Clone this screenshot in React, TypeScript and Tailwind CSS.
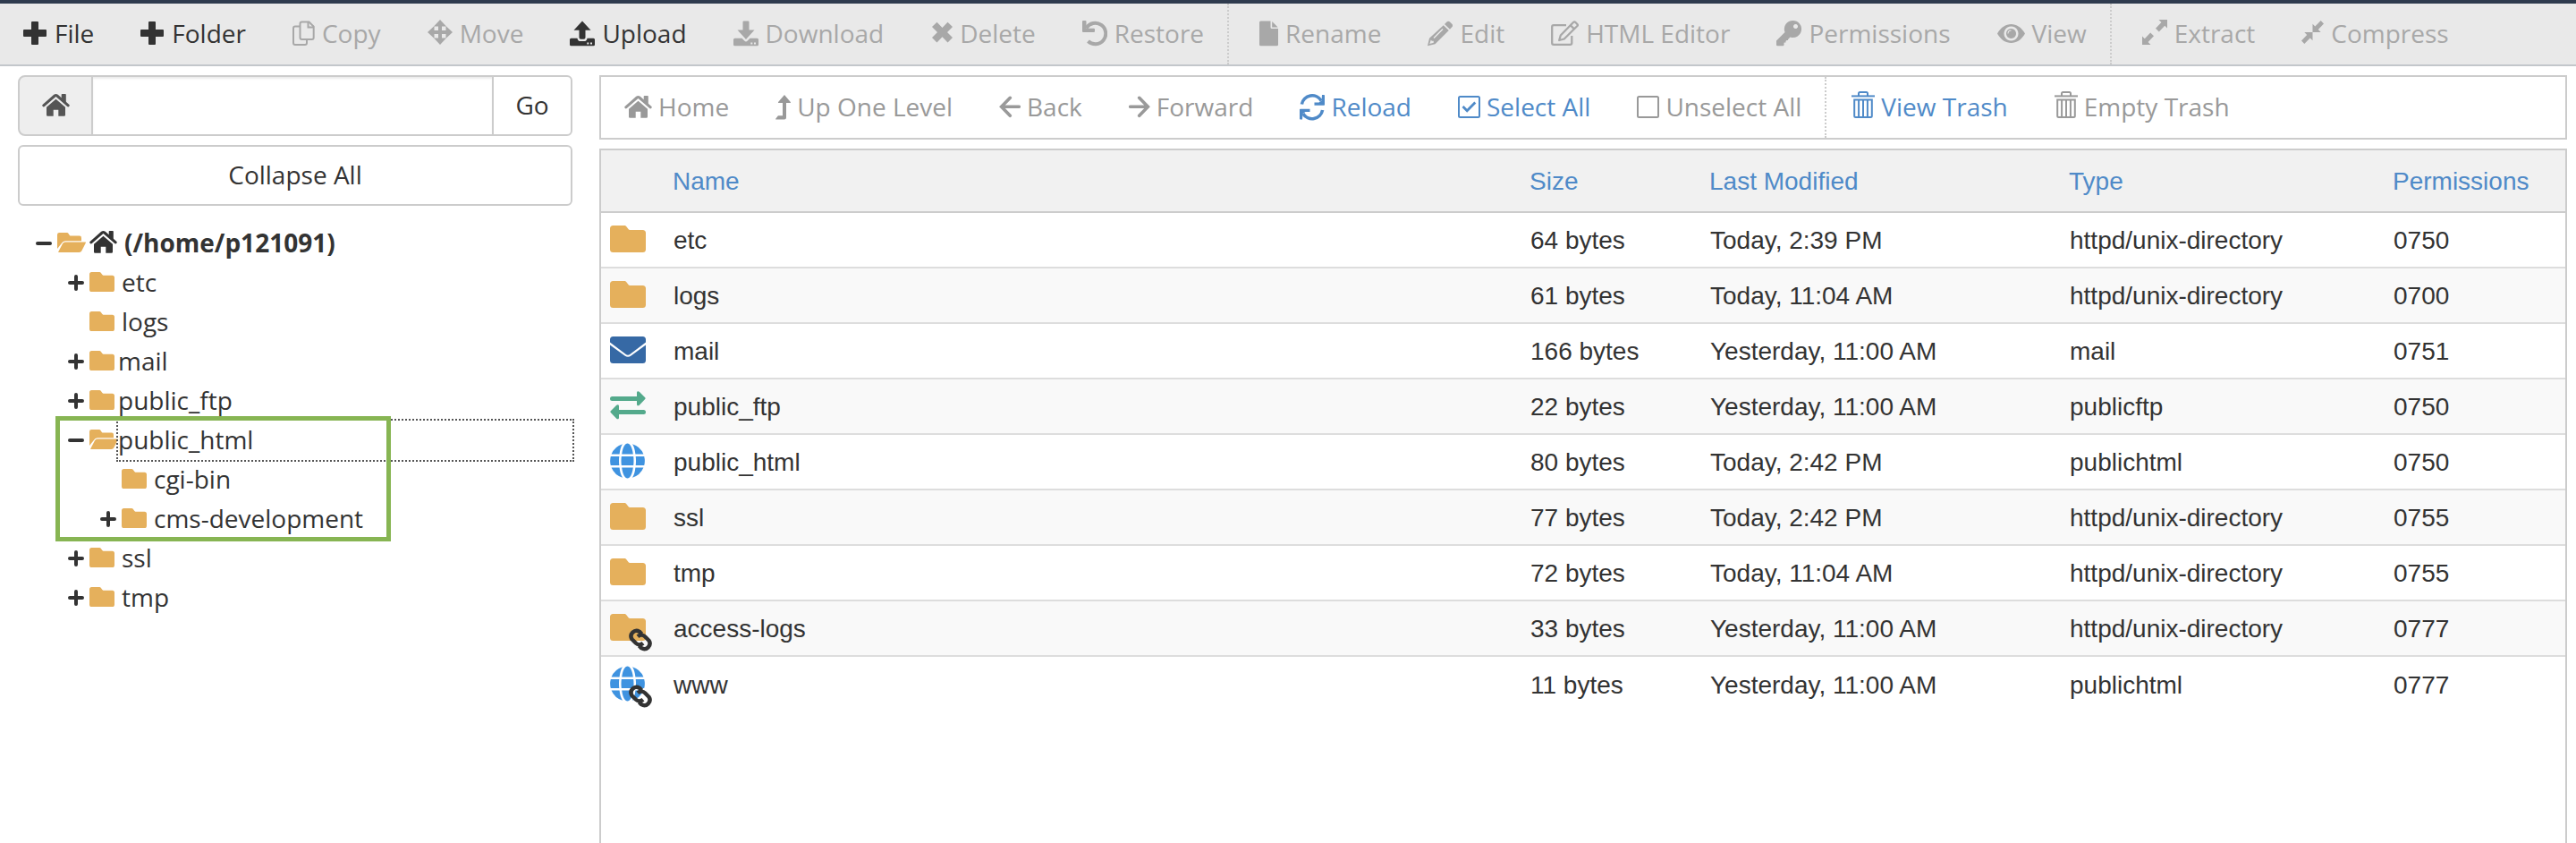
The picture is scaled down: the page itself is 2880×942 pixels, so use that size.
import type { ReactNode } from "react";

/* ---------- Icons ---------- */

function Icon({ w, children }: { w: number; children: ReactNode }) {
  return (
    <svg
      width={w}
      height={40}
      viewBox={`0 -4 ${w} 40`}
      fill="currentColor"
      stroke="none"
      className="shrink-0"
      aria-hidden="true"
    >
      {children}
    </svg>
  );
}

const PlusIcon = () => (
  <Icon w={27}>
    <path d="M10 2h6a1 1 0 0 1 1 1v8h8a1 1 0 0 1 1 1v6a1 1 0 0 1-1 1h-8v8a1 1 0 0 1-1 1h-6a1 1 0 0 1-1-1v-8H1a1 1 0 0 1-1-1v-6a1 1 0 0 1 1-1h8V3a1 1 0 0 1 1-1z" />
  </Icon>
);

const CopyIcon = () => (
  <Icon w={25}>
    <g fill="none" stroke="currentColor" strokeWidth="2">
      <path d="M10.500 2.500h8l5.200 5.200v12.300a2 2 0 0 1-2 2H10.500a2 2 0 0 1-2-2V4.500a2 2 0 0 1 2-2z" />
      <path d="M17.500 2.500v6h6" />
      <path d="M8.500 7.500H3a2 2 0 0 0-2 2v16.500a2 2 0 0 0 2 2h11a2 2 0 0 0 2-2v-4" />
    </g>
  </Icon>
);

const MoveIcon = () => (
  <Icon w={28}>
    <path d="M14 0l7 7.500h-5v4.500h4.500V7L28 14l-7.500 7v-5H16v4.500h5L14 28l-7-7.500h5V16H7.500v5L0 14l7.500-7v5H12V7.500H7z" />
  </Icon>
);

const UploadIcon = () => (
  <Icon w={28}>
    <path d="M14 1.500l9.500 10.200h-6v8.300a1.800 1.800 0 0 1-1.800 1.800h-3.400a1.800 1.800 0 0 1-1.800-1.800v-8.300h-6z" />
    <path
      fillRule="evenodd"
      d="M1.500 20.700H8.500c.3 2.500 1.500 3.300 3.500 3.300h4c2 0 3.200-.8 3.500-3.300h7a1.500 1.500 0 0 1 1.500 1.500v5.500a1.500 1.500 0 0 1-1.500 1.500h-25A1.500 1.500 0 0 1 0 27.700v-5.500a1.500 1.500 0 0 1 1.500-1.500zM19.300 25.500h2v2h-2zM23 25.500h2v2h-2z"
    />
  </Icon>
);

const DownloadIcon = () => (
  <Icon w={28}>
    <path d="M11.500 1.500h5a1 1 0 0 1 1 1v9h6L14 22 4.500 11.500h6v-9a1 1 0 0 1 1-1z" />
    <path
      fillRule="evenodd"
      d="M1.500 20.700H9.500l3 3a2.200 2.200 0 0 0 3 0l3-3h8a1.500 1.500 0 0 1 1.500 1.500v5.500a1.500 1.500 0 0 1-1.500 1.500h-25A1.500 1.500 0 0 1 0 27.700v-5.500a1.500 1.500 0 0 1 1.500-1.500zM19.300 25.500h2v2h-2zM23 25.500h2v2h-2z"
    />
  </Icon>
);

const DeleteIcon = () => (
  <Icon w={25}>
    <path d="M7.500 2.800l6 6.200 6-6.200 5.500 5.200-6 6 6 6-5.500 5.400-6-6.200-6 6.200L2 20l6-6-6-6z" />
  </Icon>
);

const RestoreIcon = () => (
  <Icon w={28}>
    <path
      d="M4.500 9.500A11.700 11.700 0 1 1 6.500 24"
      fill="none"
      stroke="currentColor"
      strokeWidth="4"
    />
    <path d="M1 1h2.500a1 1 0 0 1 1 1v7.700H13a1 1 0 0 1 1 1V13a1 1 0 0 1-1 1H1a1 1 0 0 1-1-1V2a1 1 0 0 1 1-1z" />
  </Icon>
);

const FileIcon = () => (
  <Icon w={21}>
    <path d="M1.500 1.500h11v7A1.500 1.500 0 0 0 14 10h7v17.700a1.500 1.500 0 0 1-1.500 1.500h-18A1.500 1.500 0 0 1 0 27.700V3a1.500 1.500 0 0 1 1.500-1.500z" />
    <path d="M14.200 2l6.500 6.500h-6.500z" />
  </Icon>
);

const PencilIcon = () => (
  <Icon w={28}>
    <path d="M19 5l2.500-2.500a2.500 2.500 0 0 1 3.500 0l2.300 2.300a2.500 2.500 0 0 1 0 3.500L25 10.800z" />
    <path
      fillRule="evenodd"
      d="M17.800 6.200l6 5.800L8.500 27.200 0 29.200l2-8.500zM3.800 22.500l-1.500 4.500 4.500-1.300v-2h-2zM6.500 20l10-10 1 1-10 10z"
    />
  </Icon>
);

const HtmlEditorIcon = () => (
  <Icon w={31}>
    <g fill="none" stroke="currentColor" strokeWidth="2.300" strokeLinejoin="round">
      <path d="M17 6.200H3a1.800 1.800 0 0 0-1.800 1.800v18a1.800 1.800 0 0 0 1.800 1.800h18.500a1.800 1.800 0 0 0 1.800-1.800v-8" />
      <path d="M10.800 17.500L25.200 2.800a1.500 1.500 0 0 1 2 0l2.200 2.200a1.500 1.500 0 0 1 0 2L14.800 21.500l-5.600 1.500z" />
      <path d="M21.800 6.200l4.200 4.200" />
    </g>
  </Icon>
);

const KeyIcon = () => (
  <Icon w={28}>
    <path
      fillRule="evenodd"
      d="M18.500 1a9.500 9.500 0 1 1-3 18.500L13 22v1h-1.500l-1 1v1.500H9l-.5.500v2a1.200 1.200 0 0 1-1.200 1.200H1.200A1.200 1.200 0 0 1 0 28v-4.500L9.500 14A9.500 9.500 0 0 1 18.500 1zM21.500 5a2.500 2.500 0 1 0 .01 0z"
    />
  </Icon>
);

const EyeIcon = () => (
  <Icon w={31}>
    <path
      fillRule="evenodd"
      d="M0 15.500C4 8.500 9.500 5 15.500 5S27 8.500 31 15.500C27 22.500 21.500 26 15.500 26S4 22.500 0 15.500zM15.500 7.500a8 8 0 1 0 .01 0z"
    />
    <path
      fillRule="evenodd"
      d="M15.500 10a5.500 5.500 0 1 1-.01 0zM15.500 12.500a3 3 0 0 0-3 3h-1a4 4 0 0 1 4-4z"
    />
  </Icon>
);

const ExtractIcon = () => (
  <Icon w={28}>
    <path d="M18.500 0H28v9.500l-2.800-2.800-6.400 6.800-3.800-3.800 6.400-6.700z" />
    <path d="M9.500 28H0v-9.500l2.800 2.800 6.400-6.800 3.800 3.800-6.400 6.700z" />
  </Icon>
);

const CompressIcon = () => (
  <Icon w={25}>
    <path d="M12.500 14V4.800l2.800 2.700L21.700 1 25 4.500l-6.200 6.500 2.900 3z" />
    <path d="M12.500 14v9.300l-2.800-2.800L3.300 27 0 23.500 6.200 17l-2.900-3z" />
  </Icon>
);

const HomeIcon = () => (
  <Icon w={31}>
    <path
      d="M1.800 15.800L14.200 5a2 2 0 0 1 2.600 0l12.400 10.800"
      fill="none"
      stroke="currentColor"
      strokeWidth="3"
      strokeLinecap="round"
    />
    <path d="M22.500 3h3.500a.8.8 0 0 1 .8.800v8.700L21.700 8V3.800a.8.8 0 0 1 .8-.8z" />
    <path d="M15.500 8.800L26 17.800V26.500a1.300 1.300 0 0 1-1.300 1.300H18.300v-7h-5.600v7H6.300A1.300 1.300 0 0 1 5 26.500v-8.700z" />
  </Icon>
);

const UpIcon = () => (
  <Icon w={17}>
    <path d="M10 2l6.800 8a.6.6 0 0 1-.5 1H12v16.500a2 2 0 0 1-2 2H.8a.5.5 0 0 1-.4-.9l2.300-3a1 1 0 0 1 .8-.4H8V11H3.600a.6.6 0 0 1-.5-1z" />
  </Icon>
);

const BackIcon = () => (
  <Icon w={24}>
    <path
      d="M12.300 5.300L2.600 15.300l9.700 10M3.500 15.300h18.800"
      fill="none"
      stroke="currentColor"
      strokeWidth="3.600"
      strokeLinecap="round"
      strokeLinejoin="miter"
    />
  </Icon>
);

const ForwardIcon = () => (
  <Icon w={24}>
    <path
      d="M11.700 5.300l9.700 10-9.700 10M20.500 15.300H1.700"
      fill="none"
      stroke="currentColor"
      strokeWidth="3.600"
      strokeLinecap="round"
      strokeLinejoin="miter"
    />
  </Icon>
);

const ReloadIcon = () => (
  <Icon w={28}>
    <g fill="none" stroke="currentColor" strokeWidth="3.600">
      <path d="M2.400 12.500A11.900 11.900 0 0 1 24.200 8.500" />
      <path d="M25.600 19A11.900 11.900 0 0 1 3.800 23" />
    </g>
    <path d="M25 2h2.200a.8.8 0 0 1 .8.800V13a.8.8 0 0 1-.8.800H16.500v-3.300h5l3-2z" />
    <path d="M3 29.500H.8a.8.8 0 0 1-.8-.8V18.500a.8.8 0 0 1 .8-.8H11.500V21h-5l-3 2z" />
  </Icon>
);

const SelectAllIcon = () => (
  <Icon w={25}>
    <g fill="none" stroke="currentColor">
      <rect x="1" y="4" width="23" height="23" rx="1.500" strokeWidth="2" />
      <path d="M5.500 15l4.700 4.700L19.300 10.500" strokeWidth="2.800" />
    </g>
  </Icon>
);

const UnselectAllIcon = () => (
  <Icon w={25}>
    <rect x="1" y="4" width="23" height="23" rx="1.500" strokeWidth="2" fill="none" stroke="currentColor" />
  </Icon>
);

const TrashIcon = () => (
  <Icon w={26}>
    <g fill="none" stroke="currentColor" strokeWidth="2">
      <path d="M0 3.400h26" />
      <path d="M8 3V.5A1.500 1.500 0 0 1 9.500-1h7A1.500 1.500 0 0 1 18 .5V3" />
      <path d="M3.200 7.600h19.600v17.900a1.500 1.500 0 0 1-1.500 1.500H4.700a1.500 1.500 0 0 1-1.500-1.500z" />
      <path d="M8.100 8v19M13 8v19M17.900 8v19" />
    </g>
  </Icon>
);

const FolderIcon = ({ size }: { size: "sm" | "lg" }) => (
  <svg
    viewBox="0 0 40 30"
    preserveAspectRatio="none"
    fill="currentColor"
    className={size === "lg" ? "h-[30px] w-10 text-[#e5b05c]" : "h-[22px] w-7 text-[#e5b05c]"}
    aria-hidden="true"
  >
    <path d="M3.500 0h12.500c1 0 1.500.3 2.200 1l2.300 3c.7.800 1.200 1 2.200 1H36.500a3.500 3.500 0 0 1 3.500 3.500v18a3.500 3.500 0 0 1-3.500 3.500h-33A3.500 3.500 0 0 1 0 26.500v-23A3.500 3.500 0 0 1 3.500 0z" />
  </svg>
);

const FolderOpenIcon = () => (
  <svg viewBox="0 0 32 22" fill="currentColor" className="h-[22px] w-8 text-[#e5b05c]" aria-hidden="true">
    <path d="M0 18V2.300A2.300 2.300 0 0 1 2.300 0h8.200c1 0 1.500.4 2 1l1.200 1.700c.5.700 1 .9 1.800.900H24.500A2.300 2.300 0 0 1 27 6v3.300H9a4.500 4.500 0 0 0-4 2.500z" />
    <path d="M9 10.400H31.500a.5.500 0 0 1 .4.800L27.500 20a3.500 3.500 0 0 1-3 2H1.800a.5.500 0 0 1-.5-.8L6 12.200a3.300 3.300 0 0 1 3-1.800z" />
  </svg>
);

const MailIcon = () => (
  <svg viewBox="0 0 40 30" fill="currentColor" className="h-[30px] w-10 text-[#3669a5]" aria-hidden="true">
    <path d="M3.500 0h33A3.500 3.500 0 0 1 40 3.500V6.500L22.500 19.700a4.200 4.200 0 0 1-5 0L0 6.500v-3A3.500 3.500 0 0 1 3.500 0z" />
    <path d="M0 9.500l16.500 12a6 6 0 0 0 7 0L40 9.500v17a3.500 3.500 0 0 1-3.500 3.500h-33A3.500 3.500 0 0 1 0 26.500z" />
  </svg>
);

const FtpIcon = () => (
  <svg viewBox="0 0 40 32" fill="currentColor" className="h-8 w-10 text-[#54aa8c]" aria-hidden="true">
    <path d="M2.500 6H30V2c0-2 1.500-2.500 3-1l6 6c.8.800.8 1.500 0 2.300l-6 6.200c-1.500 1.500-3 1-3-1V11H2.500a2.500 2.500 0 0 1 0-5z" />
    <path d="M37.500 21H10v-4c0-2-1.500-2.500-3-1l-6 6c-.8.800-.8 1.500 0 2.300l6 6.200c1.500 1.500 3 1 3-1V26h27.500a2.500 2.500 0 0 0 0-5z" />
  </svg>
);

const GlobeIcon = () => (
  <svg viewBox="0 0 40 40" fill="none" className="size-10 text-[#3f93e0]" aria-hidden="true">
    <path d="M13.200 12.500C14.200 4.500 16.800.5 19.500.5s5.300 4 6.300 12z" fill="currentColor" />
    <path d="M13.200 27.500c1 8 3.600 12 6.300 12s5.300-4 6.300-12z" fill="currentColor" />
    <path d="M12.800 15h13.400c.4 3.500.4 6.500 0 10H12.800c-.4-3.500-.4-6.500 0-10z" fill="currentColor" />
    <path d="M10.300 15c-.4 3.500-.4 6.500 0 10H.8a19.500 19.500 0 0 1 0-10zM28.700 15c.4 3.500.4 6.500 0 10h9.500a19.500 19.500 0 0 0 0-10z" fill="currentColor" />
    <path d="M10.600 12.500H1.600A19.500 19.500 0 0 1 14 1.300c-1.700 2.500-2.900 6.200-3.400 11.200zM28.400 12.500h9A19.500 19.500 0 0 0 25 1.300c1.700 2.500 2.900 6.200 3.400 11.200z" fill="currentColor" />
    <path d="M10.600 27.500H1.600A19.500 19.500 0 0 0 14 38.700c-1.700-2.500-2.900-6.200-3.400-11.200zM28.400 27.500h9A19.500 19.500 0 0 1 25 38.700c1.700-2.500 2.900-6.200 3.400-11.200z" fill="currentColor" />
  </svg>
);

const LinkBadge = () => (
  <svg
    viewBox="0 0 28 28"
    fill="none"
    stroke="#333333"
    strokeWidth="4.500"
    className="absolute top-1/2 left-5 size-7"
    aria-hidden="true"
  >
    <path d="M15.500 7.500l-2.600-2.700a6.100 6.100 0 0 0-8.400 8.400l4.200 4.300a6.100 6.100 0 0 0 8.300.2" />
    <path d="M12.500 20.500l2.600 2.700a6.100 6.100 0 0 0 8.400-8.400l-4.200-4.300a6.100 6.100 0 0 0-8.300-.2" />
  </svg>
);

/* ---------- Toolbars ---------- */

type Action = { label: string; icon: ReactNode; enabled?: boolean };

const actionGroups: Action[][] = [
  [
    { label: "File", icon: <PlusIcon />, enabled: true },
    { label: "Folder", icon: <PlusIcon />, enabled: true },
    { label: "Copy", icon: <CopyIcon /> },
    { label: "Move", icon: <MoveIcon /> },
    { label: "Upload", icon: <UploadIcon />, enabled: true },
    { label: "Download", icon: <DownloadIcon /> },
    { label: "Delete", icon: <DeleteIcon /> },
    { label: "Restore", icon: <RestoreIcon /> },
  ],
  [
    { label: "Rename", icon: <FileIcon /> },
    { label: "Edit", icon: <PencilIcon /> },
    { label: "HTML Editor", icon: <HtmlEditorIcon /> },
    { label: "Permissions", icon: <KeyIcon /> },
    { label: "View", icon: <EyeIcon /> },
  ],
  [
    { label: "Extract", icon: <ExtractIcon /> },
    { label: "Compress", icon: <CompressIcon /> },
  ],
];

const navGroups: Action[][] = [
  [
    { label: "Home", icon: <HomeIcon /> },
    { label: "Up One Level", icon: <UpIcon /> },
    { label: "Back", icon: <BackIcon /> },
    { label: "Forward", icon: <ForwardIcon /> },
    { label: "Reload", icon: <ReloadIcon />, enabled: true },
    { label: "Select All", icon: <SelectAllIcon />, enabled: true },
    { label: "Unselect All", icon: <UnselectAllIcon /> },
  ],
  [
    { label: "View Trash", icon: <TrashIcon />, enabled: true },
    { label: "Empty Trash", icon: <TrashIcon /> },
  ],
];

function ToolbarButton({ action, tone }: { action: Action; tone: string }) {
  return (
    <button
      type="button"
      disabled={!action.enabled}
      className={`flex h-full items-center px-[26px] whitespace-nowrap ${tone}`}
    >
      {action.icon}
      <span className="pb-0.5">{action.label}</span>
    </button>
  );
}

function ActionBar() {
  return (
    <nav
      aria-label="File actions"
      className="flex h-[74px] items-stretch border-t-4 border-b-2 border-t-[#2f3b4e] border-b-[#c3c7cb] bg-[#e9e9e9]"
    >
      {actionGroups.map((group, i) => (
        <div
          key={i}
          className={i === 0 ? "flex" : "flex border-l-2 border-dotted border-[#cccccc] pl-2"}
        >
          {group.map((action) => (
            <ToolbarButton
              key={action.label}
              action={action}
              tone={action.enabled ? "gap-2 text-[#333333]" : "gap-2 text-[#a8a8a8]"}
            />
          ))}
        </div>
      ))}
    </nav>
  );
}

function NavBar() {
  return (
    <nav aria-label="Navigation" className="flex h-[72px] items-stretch border-2 border-[#cccccc] bg-white">
      {navGroups.map((group, i) => (
        <div
          key={i}
          className={i === 0 ? "flex" : "flex border-l-2 border-dotted border-[#cccccc] pl-0.5"}
        >
          {group.map((action) => (
            <ToolbarButton
              key={action.label}
              action={action}
              tone={action.enabled ? "gap-[7px] text-[#4f8ac8]" : "gap-[7px] text-[#999999]"}
            />
          ))}
        </div>
      ))}
    </nav>
  );
}

/* ---------- Folder tree ---------- */

type TreeNode = {
  name: string;
  state: "open" | "closed" | "leaf";
  special?: boolean;
  focused?: boolean;
  children?: TreeNode[];
};

const treeNodes: TreeNode[] = [
  { name: "etc", state: "closed" },
  { name: "logs", state: "leaf" },
  { name: "mail", state: "closed", special: true },
  { name: "public_ftp", state: "closed", special: true },
  {
    name: "public_html",
    state: "open",
    special: true,
    focused: true,
    children: [
      { name: "cgi-bin", state: "leaf" },
      { name: "cms-development", state: "closed" },
    ],
  },
  { name: "ssl", state: "closed" },
  { name: "tmp", state: "closed" },
];

function Toggle({ state }: { state: TreeNode["state"] }) {
  if (state === "leaf") return <span className="w-6 shrink-0" />;
  return (
    <button
      type="button"
      aria-label={state === "open" ? "Collapse" : "Expand"}
      className="flex h-11 w-6 shrink-0 items-center"
    >
      <svg viewBox="0 0 18 18" className="size-[18px]" stroke="#333333" strokeWidth="4" strokeLinecap="round">
        <path d={state === "open" ? "M2 9h14" : "M2 9h14M9 2v14"} />
      </svg>
    </button>
  );
}

function TreeItem({ node }: { node: TreeNode }) {
  return (
    <li className="relative">
      <div className="flex h-11 items-center">
        <Toggle state={node.state} />
        <span className="w-8 shrink-0 pb-0.5">
          {node.state === "open" ? <FolderOpenIcon /> : <FolderIcon size="sm" />}
        </span>
        <a
          href="#"
          className={`flex h-11 flex-1 items-center pb-0.5 ${node.special ? "" : "pl-1"} ${
            node.focused ? "outline-2 outline-dotted outline-[#555555]" : ""
          }`}
        >
          {node.name}
        </a>
      </div>
      {node.children && (
        <ul className="pl-9">
          {node.children.map((child) => (
            <TreeItem key={child.name} node={child} />
          ))}
        </ul>
      )}
      {node.focused && (
        <div className="pointer-events-none absolute -top-[5px] -bottom-[3px] -left-[14px] w-[375px] border-5 border-[#87b553]" />
      )}
    </li>
  );
}

function Sidebar() {
  return (
    <aside className="flex w-[620px] shrink-0 flex-col">
      <form className="flex h-[68px]" onSubmit={(e) => e.preventDefault()}>
        <label
          htmlFor="path"
          aria-label="Path"
          className="flex w-[84px] items-center justify-center rounded-l-lg border-2 border-[#cccccc] bg-[#eeeeee] text-[#555555]"
        >
          <HomeIcon />
        </label>
        <input
          id="path"
          type="text"
          className="min-w-0 flex-1 border-y-2 border-[#cccccc] bg-white px-3 shadow-[inset_0_2px_2px_rgba(0,0,0,0.075)] outline-none"
        />
        <button type="submit" className="w-[90px] rounded-r-md border-2 border-[#cccccc] bg-white pb-0.5">
          Go
        </button>
      </form>
      <button type="button" className="mt-2.5 h-[68px] rounded-md border-2 border-[#cccccc] bg-white pb-0.5">
        Collapse All
      </button>
      <ul className="mt-5 pl-5">
        <li>
          <div className="flex h-11 items-center font-bold">
            <Toggle state="open" />
            <span className="w-9 shrink-0 pb-0.5">
              <FolderOpenIcon />
            </span>
            <a href="#" className="flex items-center gap-2 pb-0.5">
              <HomeIcon />
              (/home/p121091)
            </a>
          </div>
          <ul className="pl-9">
            {treeNodes.map((node) => (
              <TreeItem key={node.name} node={node} />
            ))}
          </ul>
        </li>
      </ul>
    </aside>
  );
}

/* ---------- File table ---------- */

type FileRow = {
  name: string;
  size: string;
  modified: string;
  type: string;
  perms: string;
  icon: ReactNode;
  linked?: boolean;
};

const folder = <FolderIcon size="lg" />;

const files: FileRow[] = [
  { name: "etc", size: "64 bytes", modified: "Today, 2:39 PM", type: "httpd/unix-directory", perms: "0750", icon: folder },
  { name: "logs", size: "61 bytes", modified: "Today, 11:04 AM", type: "httpd/unix-directory", perms: "0700", icon: folder },
  { name: "mail", size: "166 bytes", modified: "Yesterday, 11:00 AM", type: "mail", perms: "0751", icon: <MailIcon /> },
  { name: "public_ftp", size: "22 bytes", modified: "Yesterday, 11:00 AM", type: "publicftp", perms: "0750", icon: <FtpIcon /> },
  { name: "public_html", size: "80 bytes", modified: "Today, 2:42 PM", type: "publichtml", perms: "0750", icon: <GlobeIcon /> },
  { name: "ssl", size: "77 bytes", modified: "Today, 2:42 PM", type: "httpd/unix-directory", perms: "0755", icon: folder },
  { name: "tmp", size: "72 bytes", modified: "Today, 11:04 AM", type: "httpd/unix-directory", perms: "0755", icon: folder },
  { name: "access-logs", size: "33 bytes", modified: "Yesterday, 11:00 AM", type: "httpd/unix-directory", perms: "0777", icon: folder, linked: true },
  { name: "www", size: "11 bytes", modified: "Yesterday, 11:00 AM", type: "publichtml", perms: "0777", icon: <GlobeIcon />, linked: true },
];

function Cell({ children }: { children: ReactNode }) {
  return <td className="pt-0.5 pl-[11px] whitespace-nowrap">{children}</td>;
}

function FileTable() {
  return (
    <div className="mt-2.5 flex-1 border-2 border-b-0 border-[#cccccc] bg-white font-['Liberation_Sans',Arial,sans-serif]">
      <table className="w-full table-fixed border-separate border-spacing-0 text-left">
        <colgroup>
          <col className="w-[70px]" />
          <col />
          <col className="w-[201px]" />
          <col className="w-[402px]" />
          <col className="w-[362px]" />
          <col className="w-[203px]" />
        </colgroup>
        <thead>
          <tr className="bg-[#f1f1f1] text-[#4f8ac8]">
            <th aria-label="Icon" className="h-[70px] border-b-2 border-[#cccccc]" />
            {["Name", "Size", "Last Modified", "Type", "Permissions"].map((heading) => (
              <th
                key={heading}
                scope="col"
                className="border-b-2 border-[#cccccc] px-2.5 pt-0.5 font-normal whitespace-nowrap"
              >
                {heading}
              </th>
            ))}
          </tr>
        </thead>
        <tbody className="[&>tr:not(:last-child)>td]:border-b-2 [&>tr:not(:last-child)>td]:border-[#dddddd]">
          {files.map((file) => (
            <tr key={file.name} className="even:bg-[#f9f9f9]">
              <td className="h-[62px] pb-0.5 pl-2.5">
                <span className="relative flex w-10 items-center">
                  {file.icon}
                  {file.linked && <LinkBadge />}
                </span>
              </td>
              <Cell>{file.name}</Cell>
              <Cell>{file.size}</Cell>
              <Cell>{file.modified}</Cell>
              <Cell>{file.type}</Cell>
              <Cell>{file.perms}</Cell>
            </tr>
          ))}
        </tbody>
      </table>
    </div>
  );
}

export default function App() {
  return (
    <div className="flex min-h-screen flex-col bg-white font-['Open_Sans',sans-serif] text-[28px] leading-10 text-[#333333]">
      <ActionBar />
      <main className="flex flex-1 gap-[30px] pt-2.5 pr-2.5 pl-5">
        <Sidebar />
        <section className="flex min-w-0 flex-1 flex-col">
          <NavBar />
          <FileTable />
        </section>
      </main>
    </div>
  );
}
